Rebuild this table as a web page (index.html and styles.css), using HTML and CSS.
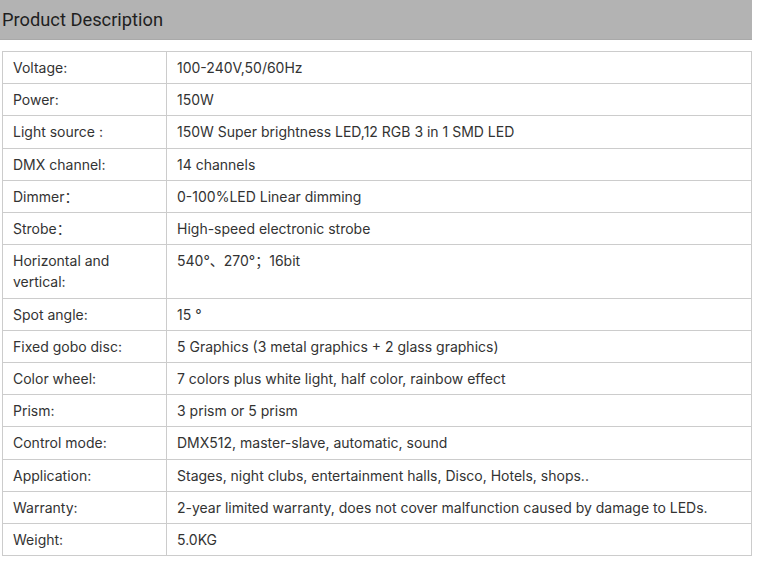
FILE: index.html
```html
<!DOCTYPE html>
<html>
<head>
<meta charset="utf-8">
<link rel="stylesheet" href="styles.css">
</head>
<body>
<div class="page">
  <div class="head"><h2 class="title">Product Description</h2></div>
  <table class="spec">
    <tr><td class="k">Voltage:</td><td>100-240V,50/60Hz</td></tr>
    <tr><td class="k">Power:</td><td>150W</td></tr>
    <tr><td class="k">Light source :</td><td>150W Super brightness LED,12 RGB 3 in 1 SMD LED</td></tr>
    <tr><td class="k">DMX channel:</td><td>14 channels</td></tr>
    <tr><td class="k">Dimmer：</td><td>0-100%LED Linear dimming</td></tr>
    <tr><td class="k">Strobe：</td><td>High-speed electronic strobe</td></tr>
    <tr><td class="k">Horizontal and vertical:</td><td>540°、270°；16bit</td></tr>
    <tr><td class="k">Spot angle:</td><td>15 °</td></tr>
    <tr><td class="k">Fixed gobo disc:</td><td>5 Graphics (3 metal graphics + 2 glass graphics)</td></tr>
    <tr><td class="k">Color wheel:</td><td>7 colors plus white light, half color, rainbow effect</td></tr>
    <tr><td class="k">Prism:</td><td>3 prism or 5 prism</td></tr>
    <tr><td class="k">Control mode:</td><td>DMX512, master-slave, automatic, sound</td></tr>
    <tr><td class="k">Application:</td><td>Stages, night clubs, entertainment halls, Disco, Hotels, shops..</td></tr>
    <tr><td class="k">Warranty:</td><td>2-year limited warranty, does not cover malfunction caused by damage to LEDs.</td></tr>
    <tr><td class="k">Weight:</td><td>5.0KG</td></tr>
  </table>
</div>
</body>
</html>
```
FILE: styles.css
```css
html, body {
  margin: 0;
  padding: 0;
  background: #fff;
}
.page {
  width: 752px;
  font-family: Inter, "Liberation Sans", "Noto Sans CJK SC", sans-serif;
  color: #333;
}
.head {
  height: 39px;
  background: #b3b3b3;
  border-bottom: 1px solid #a9a9a9;
  display: flex;
  align-items: center;
}
.title {
  margin: 0 0 0 2px;
  font-family: Roboto, "Liberation Sans", sans-serif;
  font-weight: 400;
  font-size: 18.3px;
  color: #1f1f1f;
}
.spec {
  margin: 11px 0 0 2px;
  width: 750px;
  border-collapse: collapse;
  font-size: 14px;
  line-height: 21.2px;
}
.spec td {
  border: 1px solid #cccccc;
  padding: 5px 10px;
  vertical-align: top;
  color: #333;
}
.spec td.k {
  width: 143px;
}
```
